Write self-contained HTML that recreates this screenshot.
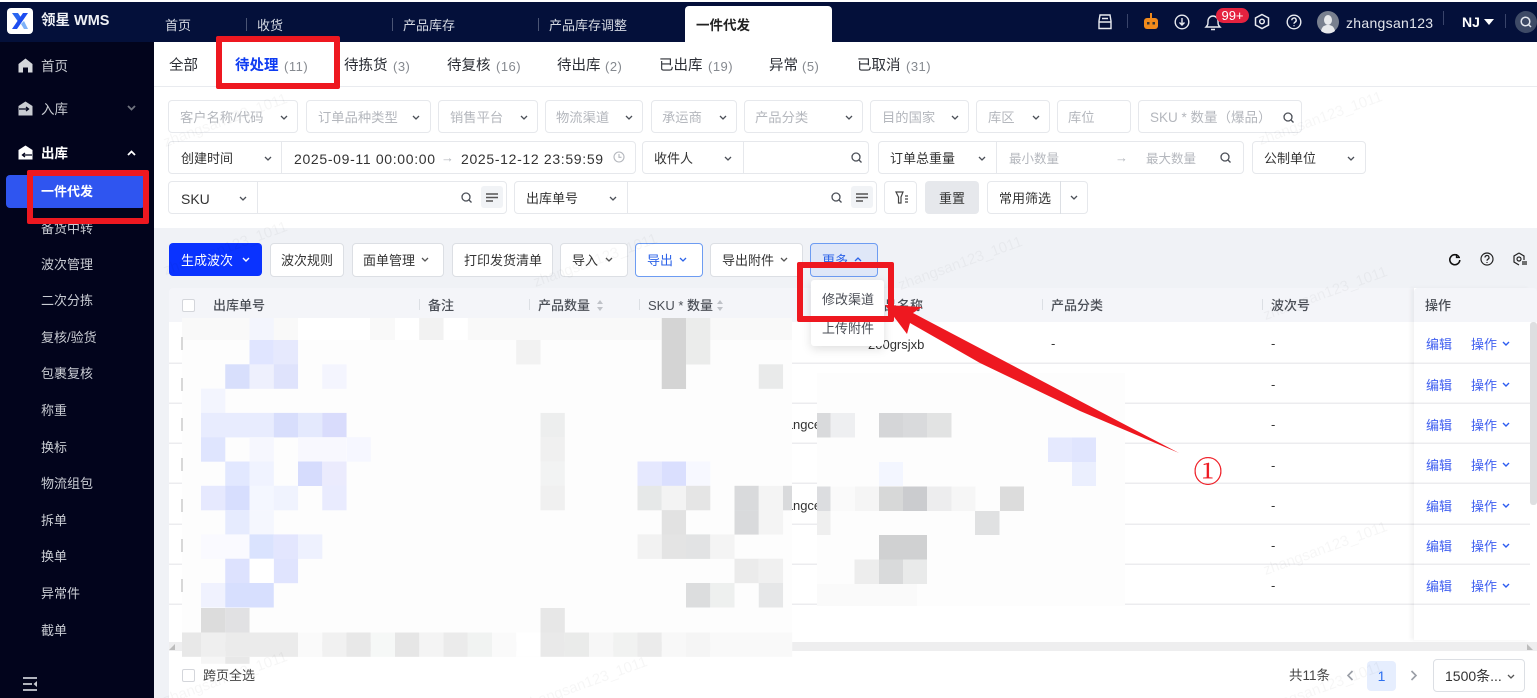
<!DOCTYPE html>
<html lang="zh">
<head>
<meta charset="utf-8">
<title>领星 WMS</title>
<style>
html,body{margin:0;padding:0;width:1537px;height:698px;overflow:hidden;background:#fff}
body{position:relative;font-family:"Liberation Sans","Noto Sans CJK SC",sans-serif;font-size:13px;color:#333}
.t{position:absolute;white-space:nowrap;line-height:16px;height:16px;margin-top:1px}
.b{position:absolute;box-sizing:border-box;background:#fff;border:1.5px solid #e6e8ec;border-radius:4px}
.r{position:absolute;box-sizing:border-box;background:#e2e5e9}
.s{position:absolute;background:#e6e8ec;width:1px}
.red{position:absolute;box-sizing:border-box;border:6px solid #ee1820;border-radius:2px}
.ph{color:#b4b7bd}
.side{color:#c9ccd3;font-size:13.5px}
.tab{font-size:14.5px;color:#2c2f36}
.cnt{font-size:13px;letter-spacing:.5px;color:#85898f}
.nav{color:#d5d9e2;font-size:13px}
.btn{position:absolute;box-sizing:border-box;background:#fff;border:1.5px solid #dcdfe4;border-radius:4px;height:34px}
.th{font-weight:500;font-size:13px;color:#4b4f57}
.link{color:#3f5ff0;font-size:13px}
svg{position:absolute;overflow:visible}
.wm{position:absolute;color:#000;opacity:.03;font-size:15px;transform:rotate(-20deg);white-space:nowrap}
</style>
</head>
<body>
<!-- page background -->
<div style="position:absolute;left:154px;top:42px;width:1383px;height:656px;background:#f0f2f6"></div>
<div style="position:absolute;left:154px;top:42px;width:1383px;height:44px;background:#fff"></div>
<div style="position:absolute;left:154px;top:87px;width:1383px;height:141px;background:#fff"></div>
<div style="position:absolute;left:169px;top:322px;width:1368px;height:376px;background:#fff"></div>

<!-- top bar -->
<div style="position:absolute;left:0;top:2px;width:1537px;height:40px;background:#04103a"></div>
<div style="position:absolute;left:7px;top:8px;width:26px;height:26px;background:#fff;border-radius:4px"></div>
<svg style="left:7px;top:8px" width="26" height="26" viewBox="0 0 26 26"><path d="M5 5h6l4 6-3 4z" fill="#2a66f0"/><path d="M21 5h-5L5 21h5z" fill="#1d4df0"/><path d="M14 16l3-3 4 8h-4z" fill="#7fb2f8"/></svg>
<span class="t" style="left:41px;top:12px;color:#eef0f5;font-weight:700;font-size:14.5px">领星 WMS</span>
<span class="t nav" style="left:165px;top:17px">首页</span>
<div class="s" style="left:246px;top:18px;height:13px;background:#4a5474"></div>
<span class="t nav" style="left:257px;top:17px">收货</span>
<div class="s" style="left:392px;top:18px;height:13px;background:#4a5474"></div>
<span class="t nav" style="left:403px;top:17px">产品库存</span>
<div class="s" style="left:538px;top:18px;height:13px;background:#4a5474"></div>
<span class="t nav" style="left:549px;top:17px">产品库存调整</span>
<div style="position:absolute;left:685px;top:6px;width:147px;height:37px;background:#fff;border-radius:4px 4px 0 0"></div>
<span class="t" style="left:696px;top:17px;font-weight:700;color:#222;font-size:13.5px">一件代发</span>

<!-- top right icons -->
<svg style="left:1097px;top:14px" width="16" height="16" viewBox="0 0 16 16" fill="none" stroke="#e8eaf0" stroke-width="1.4"><path d="M3 1h10l1 6v7.500H2V7zM2 8h12M5 4.500h6"/></svg>
<div class="s" style="left:1127px;top:14px;height:14px;background:#39446a"></div>
<svg style="left:1143px;top:13px" width="16" height="17" viewBox="0 0 16 17"><rect x="1" y="5" width="14" height="11" rx="3" fill="#f08a1c"/><rect x="7" y="0" width="2" height="5" fill="#f08a1c"/><rect x="4" y="9" width="2.5" height="2.5" fill="#333"/><rect x="9.5" y="9" width="2.5" height="2.5" fill="#333"/></svg>
<svg style="left:1174px;top:14px" width="16" height="16" viewBox="0 0 16 16" fill="none" stroke="#e8eaf0" stroke-width="1.4"><circle cx="8" cy="8" r="6.8"/><path d="M8 4v7M5.500 8.500L8 11l2.500-2.500"/></svg>
<svg style="left:1205px;top:14px" width="16" height="17" viewBox="0 0 16 17" fill="none" stroke="#e8eaf0" stroke-width="1.4"><path d="M1 13h14c-2-2-2-3-2-6a5 5 0 0 0-10 0c0 3 0 4-2 6zM6 15.500h4"/></svg>
<div style="position:absolute;left:1216px;top:8px;width:33px;height:15px;background:#e5223f;border-radius:8px;color:#fff;font-size:13px;line-height:15px;text-align:center">99+</div>
<svg style="left:1254px;top:13px" width="16" height="17" viewBox="0 0 16 17" fill="none" stroke="#e8eaf0" stroke-width="1.5"><path d="M8 1.500l6.500 3.500v7L8 15.500 1.500 12V5z"/><circle cx="8" cy="8.500" r="2.300"/></svg>
<svg style="left:1286px;top:14px" width="16" height="16" viewBox="0 0 16 16" fill="none" stroke="#e8eaf0" stroke-width="1.4"><circle cx="8" cy="8" r="6.800"/><path d="M5.800 6.200a2.200 2.200 0 1 1 3.300 1.900c-.8.500-1.100.9-1.100 1.700M8 11.300v1"/></svg>
<svg style="left:1317px;top:11px" width="22" height="22" viewBox="0 0 22 22"><circle cx="11" cy="11" r="11" fill="#79808f"/><ellipse cx="11" cy="9" rx="4" ry="5" fill="#e8e9ec"/><path d="M4 20c1-5 4-6 7-6s6 1 7 6a11 11 0 0 1-14 0z" fill="#e8e9ec"/></svg>
<span class="t" style="left:1346px;top:14px;color:#e2e5ec;font-size:14px;letter-spacing:.3px">zhangsan123</span>
<div class="s" style="left:1443px;top:11px;height:14px;background:#39446a"></div>
<span class="t" style="left:1462px;top:13px;color:#fff;font-weight:700;font-size:14px">NJ</span>
<svg style="left:1484px;top:19px" width="10" height="6" viewBox="0 0 10 6"><path d="M0 0h10L5 6z" fill="#fff"/></svg>
<div class="s" style="left:1505px;top:14px;height:14px;background:#39446a"></div>
<svg style="left:1515px;top:11px" width="22" height="22" viewBox="0 0 22 22"><circle cx="11" cy="11" r="11" fill="#3e4a66"/><circle cx="10.500" cy="10.500" r="4.300" fill="none" stroke="#e4e7ee" stroke-width="1.500"/><path d="M13.500 13.500l2.500 2.500" stroke="#e4e7ee" stroke-width="1.500"/></svg>

<!-- sidebar -->
<div style="position:absolute;left:0;top:42px;width:154px;height:656px;background:#02041c"></div>
<svg style="left:18px;top:58px" width="15" height="15" viewBox="0 0 15 15"><path d="M7.500 .5L14.500 6v8.500h-4.500V9.500H5v5H.5V6z" fill="#d5d7dc"/></svg>
<svg style="left:18px;top:101px" width="15" height="15" viewBox="0 0 15 15"><path d="M7.500 .5L14.500 5v9.500H.5V5z" fill="#c9ccd2"/><path d="M1 8h9M8 6l2.500 2L8 10" stroke="#02041c" stroke-width="1.300" fill="none"/></svg>
<svg style="left:18px;top:145px" width="15" height="15" viewBox="0 0 15 15"><path d="M7.500 .5L14.500 5v9.500H.5V5z" fill="#fff"/><path d="M14 10H5M7 8l-2.500 2L7 12" stroke="#02041c" stroke-width="1.300" fill="none"/></svg>
<span class="t side" style="left:41px;top:58px">首页</span>
<span class="t side" style="left:41px;top:101px">入库</span>
<svg style="left:127px;top:105px" width="9" height="6" viewBox="0 0 9 6"><path d="M1 1l3.500 3.500L8 1" stroke="#70747f" stroke-width="1.800" fill="none"/></svg>
<span class="t" style="left:41px;top:145px;color:#fff;font-weight:700;font-size:13.5px">出库</span>
<svg style="left:127px;top:150px" width="9" height="6" viewBox="0 0 9 6"><path d="M1 5l3.500-3.500L8 5" stroke="#fff" stroke-width="1.800" fill="none"/></svg>
<div style="position:absolute;left:6px;top:175px;width:139px;height:33px;background:#2f55f0;border-radius:4px"></div>
<span class="t" style="left:41px;top:183px;color:#fff;font-weight:700;font-size:13px">一件代发</span>
<span class="t side" style="left:41px;top:220px;font-size:13px">备货中转</span>
<span class="t side" style="left:41px;top:256px;font-size:13px">波次管理</span>
<span class="t side" style="left:41px;top:292px;font-size:13px">二次分拣</span>
<span class="t side" style="left:41px;top:329px;font-size:13px">复核/验货</span>
<span class="t side" style="left:41px;top:365px;font-size:13px">包裹复核</span>
<span class="t side" style="left:41px;top:402px;font-size:13px">称重</span>
<span class="t side" style="left:41px;top:439px;font-size:13px">换标</span>
<span class="t side" style="left:41px;top:475px;font-size:13px">物流组包</span>
<span class="t side" style="left:41px;top:512px;font-size:13px">拆单</span>
<span class="t side" style="left:41px;top:548px;font-size:13px">换单</span>
<span class="t side" style="left:41px;top:585px;font-size:13px">异常件</span>
<span class="t side" style="left:41px;top:622px;font-size:13px">截单</span>
<svg style="left:22px;top:676px" width="16" height="16" viewBox="0 0 16 16"><path d="M1 2h14M1 8h9M1 14h14" stroke="#c9ccd3" stroke-width="1.700"/><path d="M15 5v6l-3.500-3z" fill="#c9ccd3"/></svg>

<!-- tabs -->
<div style="position:absolute;left:154px;top:86px;width:1383px;height:1px;background:#e9ebef"></div>
<span class="t tab" style="left:169px;top:57px">全部</span>
<span class="t" style="left:235px;top:57px;font-size:14.500px;font-weight:700;color:#0e3cf2">待处理</span><span class="t cnt" style="left:284px;top:58px">(11)</span>
<span class="t tab" style="left:344px;top:57px">待拣货</span><span class="t cnt" style="left:393px;top:58px">(3)</span>
<span class="t tab" style="left:447px;top:57px">待复核</span><span class="t cnt" style="left:496px;top:58px">(16)</span>
<span class="t tab" style="left:557px;top:57px">待出库</span><span class="t cnt" style="left:605px;top:58px">(2)</span>
<span class="t tab" style="left:659px;top:57px">已出库</span><span class="t cnt" style="left:708px;top:58px">(19)</span>
<span class="t tab" style="left:769px;top:57px">异常</span><span class="t cnt" style="left:802px;top:58px">(5)</span>
<span class="t tab" style="left:857px;top:57px">已取消</span><span class="t cnt" style="left:906px;top:58px">(31)</span>

<!-- filter row 1 -->
<div class="b" style="left:168px;top:100px;width:130px;height:33px"></div>
<div class="b" style="left:306px;top:100px;width:125px;height:33px"></div>
<div class="b" style="left:438px;top:100px;width:100px;height:33px"></div>
<div class="b" style="left:545px;top:100px;width:98px;height:33px"></div>
<div class="b" style="left:651px;top:100px;width:86px;height:33px"></div>
<div class="b" style="left:744px;top:100px;width:119px;height:33px"></div>
<div class="b" style="left:870px;top:100px;width:99px;height:33px"></div>
<div class="b" style="left:976px;top:100px;width:74px;height:33px"></div>
<div class="b" style="left:1057px;top:100px;width:74px;height:33px"></div>
<div class="b" style="left:1138px;top:100px;width:164px;height:33px"></div>
<span class="t ph" style="left:180px;top:109px;font-size:13.300px">客户名称/代码</span>
<span class="t ph" style="left:318px;top:109px;font-size:13.300px">订单品种类型</span>
<span class="t ph" style="left:450px;top:109px;font-size:13.300px">销售平台</span>
<span class="t ph" style="left:556px;top:109px;font-size:13.300px">物流渠道</span>
<span class="t ph" style="left:662px;top:109px;font-size:13.300px">承运商</span>
<span class="t ph" style="left:755px;top:109px;font-size:13.300px">产品分类</span>
<span class="t ph" style="left:882px;top:109px;font-size:13.300px">目的国家</span>
<span class="t ph" style="left:988px;top:109px;font-size:13.300px">库区</span>
<span class="t ph" style="left:1068px;top:109px;font-size:13.300px">库位</span>
<span class="t ph" style="left:1150px;top:109px;font-size:13.500px">SKU * 数量（爆品）</span>

<!-- filter row 2 -->
<div class="b" style="left:168px;top:141px;width:468px;height:33px"></div>
<div class="s" style="left:281px;top:141px;height:33px"></div>
<span class="t" style="left:181px;top:150px">创建时间</span>
<span class="t" style="left:294px;top:150px;font-size:14px;letter-spacing:.67px;color:#333">2025-09-11 00:00:00</span>
<span class="t ph" style="left:441px;top:149px;font-size:13px">→</span>
<span class="t" style="left:461px;top:150px;font-size:14px;letter-spacing:.67px;color:#333">2025-12-12 23:59:59</span>
<svg style="left:613px;top:151px" width="12" height="12" viewBox="0 0 12 12" fill="none" stroke="#b4b7bd" stroke-width="1.100"><circle cx="6" cy="6" r="5"/><path d="M6 3v3.300h2.500"/></svg>
<div class="b" style="left:642px;top:141px;width:227px;height:33px;background:none"></div>
<div class="s" style="left:743px;top:141px;height:33px"></div>
<span class="t" style="left:654px;top:150px">收件人</span>
<div class="b" style="left:878px;top:141px;width:366px;height:33px;background:none"></div>
<div class="s" style="left:996px;top:141px;height:33px"></div>
<span class="t" style="left:890px;top:150px">订单总重量</span>
<span class="t ph" style="left:1009px;top:150px;font-size:12.500px">最小数量</span>
<span class="t ph" style="left:1115px;top:149px">→</span>
<span class="t ph" style="left:1146px;top:150px;font-size:12.500px">最大数量</span>
<div class="b" style="left:1252px;top:141px;width:114px;height:33px;background:none"></div>
<span class="t" style="left:1264px;top:150px">公制单位</span>

<!-- filter row 3 -->
<div class="b" style="left:168px;top:181px;width:339px;height:33px;background:none"></div>
<div class="s" style="left:257px;top:181px;height:33px"></div>
<span class="t" style="left:181px;top:190px;font-size:14px">SKU</span>
<div style="position:absolute;left:481px;top:186px;width:22px;height:22px;background:#f1f3f6;border-radius:3px"></div>
<svg style="left:486px;top:193px" width="12" height="9" viewBox="0 0 12 9"><path d="M0 1h12M0 4.500h12M0 8h7" stroke="#555" stroke-width="1.500"/></svg>
<div class="b" style="left:514px;top:181px;width:363px;height:33px;background:none"></div>
<div class="s" style="left:627px;top:181px;height:33px"></div>
<span class="t" style="left:526px;top:190px">出库单号</span>
<div style="position:absolute;left:851px;top:186px;width:22px;height:22px;background:#f1f3f6;border-radius:3px"></div>
<svg style="left:856px;top:193px" width="12" height="9" viewBox="0 0 12 9"><path d="M0 1h12M0 4.500h12M0 8h7" stroke="#555" stroke-width="1.500"/></svg>
<div class="b" style="left:884px;top:181px;width:33px;height:33px;background:none"></div>
<svg style="left:895px;top:191px" width="13" height="13" viewBox="0 0 13 13" fill="none" stroke="#444" stroke-width="1.200"><path d="M1 1h7L6 6v6H3.500V6zM10 5h3M10 8h3M10 11h3"/></svg>
<div class="r" style="left:925px;top:181px;width:54px;height:33px;border-radius:4px;background:#e6e8ec"></div>
<span class="t" style="left:939px;top:190px;color:#333">重置</span>
<div class="b" style="left:987px;top:181px;width:101px;height:33px;background:none"></div>
<div class="s" style="left:1060px;top:181px;height:33px;background:#dcdfe4"></div>
<span class="t" style="left:999px;top:190px">常用筛选</span>

<!-- filter chevrons and search icons -->
<svg style="left:0;top:0" width="1537" height="698" fill="none" stroke="#4b4f57" stroke-width="1.300">
<defs><path id="c" d="M0 0l3 3 3-3"/><g id="m"><circle cx="5" cy="5" r="4"/><path d="M8 8l2.500 2.500"/></g></defs>
<use href="#c" x="281" y="116"/><use href="#c" x="413" y="116"/><use href="#c" x="521" y="116"/><use href="#c" x="626" y="116"/><use href="#c" x="720" y="116"/><use href="#c" x="846" y="116"/><use href="#c" x="952" y="116"/><use href="#c" x="1033" y="116"/>
<use href="#m" x="1283" y="112"/>
<use href="#c" x="265" y="157"/><use href="#c" x="725" y="157"/><use href="#c" x="979" y="157"/><use href="#c" x="1348" y="157"/>
<use href="#m" x="851" y="152"/><use href="#m" x="1220" y="152"/>
<use href="#c" x="240" y="197"/><use href="#c" x="610" y="197"/><use href="#c" x="1071" y="196"/>
<use href="#m" x="461" y="192"/><use href="#m" x="831" y="192"/>
</svg>

<!-- toolbar -->
<div style="position:absolute;left:169px;top:243px;width:93px;height:33px;background:#0a33ff;border-radius:4px"></div>
<span class="t" style="left:181px;top:252px;color:#fff">生成波次</span>
<svg style="left:242px;top:257px" width="8" height="5" viewBox="0 0 8 5"><path d="M1 1l3 3 3-3" stroke="#fff" stroke-width="1.400" fill="none"/></svg>
<div class="btn" style="left:270px;top:243px;width:74px"></div><span class="t" style="left:281px;top:252px">波次规则</span>
<div class="btn" style="left:352px;top:243px;width:92px"></div><span class="t" style="left:363px;top:252px">面单管理</span>
<div class="btn" style="left:452px;top:243px;width:101px"></div><span class="t" style="left:464px;top:252px">打印发货清单</span>
<div class="btn" style="left:560px;top:243px;width:68px"></div><span class="t" style="left:572px;top:252px">导入</span>
<div class="btn" style="left:635px;top:243px;width:68px;border-color:#6d9cf2"></div><span class="t" style="left:647px;top:252px;color:#2c63e8">导出</span>
<div class="btn" style="left:710px;top:243px;width:93px"></div><span class="t" style="left:722px;top:252px">导出附件</span>
<div class="btn" style="left:810px;top:243px;width:68px;border-color:#6d9cf2;background:#dfe7f8"></div><span class="t" style="left:822px;top:252px;color:#2c63e8">更多</span>
<svg style="left:0;top:0" width="1537" height="698" fill="none" stroke="#555" stroke-width="1.300">
<use href="#c" x="422" y="258"/><use href="#c" x="606" y="258"/><use href="#c" x="680" y="258" stroke="#2c63e8"/><use href="#c" x="781" y="258"/>
<path d="M855 261l3-3 3 3" stroke="#2c63e8"/>
</svg>
<svg style="left:1448px;top:253px" width="13" height="13" viewBox="0 0 13 13" fill="none" stroke="#111" stroke-width="1.600"><path d="M11 4a5 5 0 1 0 .8 3"/><path d="M8.500 1v3.500H12" stroke-width="1.300"/></svg>
<svg style="left:1480px;top:252px" width="14" height="14" viewBox="0 0 14 14" fill="none" stroke="#222" stroke-width="1.200"><circle cx="7" cy="7" r="6"/><path d="M5 5.500a2 2 0 1 1 3 1.700c-.7.400-1 .8-1 1.500M7 10v1"/></svg>
<svg style="left:1513px;top:252px" width="14" height="14" viewBox="0 0 14 14" fill="none" stroke="#222" stroke-width="1.200"><path d="M6 1l5 3v4M6 1L1 4v6l5 3"/><circle cx="6" cy="7" r="2"/><path d="M9 10h5M9 12h5"/></svg>

<!-- table header -->
<div style="position:absolute;left:169px;top:288px;width:1368px;height:34px;background:#f4f5f9;border-radius:4px 4px 0 0"></div>
<div style="position:absolute;left:182px;top:299px;width:13px;height:13px;box-sizing:border-box;border:1.500px solid #d4d6db;border-radius:2px;background:#fff"></div>
<span class="t th" style="left:213px;top:297px">出库单号</span>
<div class="s" style="left:419px;top:299px;height:11px;background:#dcdfe4"></div>
<span class="t th" style="left:428px;top:297px">备注</span>
<div class="s" style="left:529px;top:299px;height:11px;background:#dcdfe4"></div>
<span class="t th" style="left:538px;top:297px">产品数量</span>
<svg style="left:596px;top:300px" width="8" height="11" viewBox="0 0 8 11"><path d="M4 0l3 4H1zM4 11L1 7h6z" fill="#bfc2c8"/></svg>
<div class="s" style="left:639px;top:299px;height:11px;background:#dcdfe4"></div>
<span class="t th" style="left:648px;top:297px">SKU * 数量</span>
<svg style="left:716px;top:300px" width="8" height="11" viewBox="0 0 8 11"><path d="M4 0l3 4H1zM4 11L1 7h6z" fill="#bfc2c8"/></svg>
<span class="t th" style="left:884px;top:297px">品名称</span>
<div class="s" style="left:1042px;top:299px;height:11px;background:#dcdfe4"></div>
<span class="t th" style="left:1051px;top:297px">产品分类</span>
<div class="s" style="left:1262px;top:299px;height:11px;background:#dcdfe4"></div>
<span class="t th" style="left:1271px;top:297px">波次号</span>

<!-- row lines -->
<svg style="left:0;top:0" width="1537" height="698">
<g fill="#ececef">
<rect x="169" y="362.500" width="1245" height="1.500"/><rect x="169" y="402.500" width="1245" height="1.500"/><rect x="169" y="442.500" width="1245" height="1.500"/><rect x="169" y="482.500" width="1245" height="1.500"/><rect x="169" y="523.500" width="1245" height="1.500"/><rect x="169" y="563.500" width="1245" height="1.500"/><rect x="169" y="603.500" width="1245" height="1.500"/>
</g>
</svg>
<span class="t" style="left:868px;top:336px;font-size:13px">200grsjxb</span>
<span class="t" style="left:1051px;top:335px">-</span>
<span class="t" style="left:772px;top:416px;font-size:13px">zhangces</span>
<span class="t" style="left:772px;top:497px;font-size:13px">zhangces</span>
<span class="t" style="left:1271px;top:335px">-</span>
<span class="t" style="left:1271px;top:376px">-</span>
<span class="t" style="left:1271px;top:416px">-</span>
<span class="t" style="left:1271px;top:457px">-</span>
<span class="t" style="left:1271px;top:497px">-</span>
<span class="t" style="left:1271px;top:537px">-</span>
<span class="t" style="left:1271px;top:577px">-</span>

<!-- mosaic -->
<svg style="left:0;top:0" width="1537" height="698">
<rect x="182" y="318" width="610" height="339" fill="#fdfdfd"/>
<rect x="817" y="373" width="308" height="233" fill="#fdfdfd"/>
<rect x="182" y="318" width="610" height="22" fill="#f9f9f9"/>
<rect x="249.500" y="318" width="24.300" height="22" fill="#f3f5fd"/>
<rect x="298" y="318" width="72" height="22" fill="#fff"/>
<rect x="395" y="318" width="24.300" height="22" fill="#fff"/>
<rect x="419.250" y="318" width="24.300" height="22" fill="#f2f2f2"/>
<rect x="443.500" y="318" width="24.300" height="22" fill="#fff"/>
<!-- r1 -->
<rect x="249.500" y="340" width="24.300" height="24.500" fill="#e0e5ff"/><rect x="273.750" y="340" width="24.300" height="24.500" fill="#e6e9fd"/><rect x="516.250" y="340" width="24.300" height="24.500" fill="#f2f2f2"/>
<!-- r2 -->
<rect x="225.250" y="364.300" width="24.300" height="24.500" fill="#d8dffc"/><rect x="249.500" y="364.300" width="24.300" height="24.500" fill="#eef0fd"/><rect x="273.750" y="364.300" width="24.300" height="24.500" fill="#dfe3fc"/><rect x="322.250" y="364.300" width="24.300" height="24.500" fill="#f4f5fe"/>
<!-- r3 -->
<rect x="201" y="388.600" width="24.300" height="24.500" fill="#f3f5fe"/>
<!-- r4 -->
<rect x="201" y="412.900" width="72.800" height="24.500" fill="#e8ecfe"/><rect x="273.750" y="412.900" width="24.300" height="24.500" fill="#d8defc"/><rect x="298" y="412.900" width="24.300" height="24.500" fill="#e4e9fd"/><rect x="322.250" y="412.900" width="24.300" height="24.500" fill="#d9dcfc"/>
<rect x="540.500" y="412.900" width="24.300" height="24.500" fill="#edeeee"/>
<!-- r5 -->
<rect x="201" y="437.200" width="24.300" height="24.500" fill="#dfe5fe"/><rect x="249.500" y="437.200" width="24.300" height="24.500" fill="#f6f7fe"/><rect x="298" y="437.200" width="48" height="24.500" fill="#f8f8fe"/><rect x="346.500" y="437.200" width="24.300" height="24.500" fill="#f6f7ff"/><rect x="540.500" y="437.200" width="24.300" height="24.500" fill="#f0f0f0"/>
<!-- r6 -->
<rect x="225.250" y="461.500" width="24.300" height="24.500" fill="#e2e8ff"/><rect x="249.500" y="461.500" width="24.300" height="24.500" fill="#f0f3ff"/><rect x="298" y="461.500" width="24.300" height="24.500" fill="#d6dcfd"/><rect x="322.250" y="461.500" width="24.300" height="24.500" fill="#ebebfd"/><rect x="540.500" y="461.500" width="24.300" height="24.500" fill="#f2f3f3"/><rect x="637.500" y="461.500" width="24.300" height="24.500" fill="#e5e8fe"/><rect x="661.750" y="461.500" width="24.300" height="24.500" fill="#dadffe"/><rect x="686" y="461.500" width="24.300" height="24.500" fill="#f7f8ff"/>
<!-- r7 -->
<rect x="201" y="485.800" width="24.300" height="24.500" fill="#e6e9fe"/><rect x="225.250" y="485.800" width="24.300" height="24.500" fill="#d7defe"/><rect x="249.500" y="485.800" width="24.300" height="24.500" fill="#f4f7ff"/><rect x="273.750" y="485.800" width="24.300" height="24.500" fill="#f0f3fe"/><rect x="322.250" y="485.800" width="24.300" height="24.500" fill="#e9ebfe"/><rect x="540.500" y="485.800" width="24.300" height="24.500" fill="#f0f0f0"/><rect x="637.500" y="485.800" width="24.300" height="24.500" fill="#e6e8e8"/><rect x="661.750" y="485.800" width="24.300" height="24.500" fill="#f3f3f3"/><rect x="686" y="485.800" width="24.300" height="24.500" fill="#e5e5e5"/><rect x="734.500" y="485.800" width="24.300" height="24.500" fill="#d9dadc"/><rect x="758.750" y="485.800" width="24.300" height="24.500" fill="#f4f4f4"/><rect x="783" y="485.800" width="9" height="24.500" fill="#d9dadc"/>
<!-- r8 -->
<rect x="225.250" y="510.100" width="24.300" height="24.500" fill="#e6ebfe"/><rect x="249.500" y="510.100" width="24.300" height="24.500" fill="#f5f7fe"/><rect x="661.750" y="510.100" width="24.300" height="24.500" fill="#e2e2e2"/><rect x="734.500" y="510.100" width="24.300" height="24.500" fill="#d9dadc"/><rect x="758.750" y="510.100" width="24.300" height="24.500" fill="#f4f4f4"/>
<!-- r9 -->
<rect x="201" y="534.400" width="48.500" height="24.500" fill="#fafaff"/><rect x="249.500" y="534.400" width="24.300" height="24.500" fill="#dae3fe"/><rect x="273.750" y="534.400" width="24.300" height="24.500" fill="#e3e6fe"/><rect x="298" y="534.400" width="24.300" height="24.500" fill="#eef1fe"/><rect x="637.500" y="534.400" width="24.300" height="24.500" fill="#f2f2f2"/><rect x="661.750" y="534.400" width="24.300" height="24.500" fill="#e4e4e4"/><rect x="686" y="534.400" width="24.300" height="24.500" fill="#e2e3e4"/><rect x="710.250" y="534.400" width="24.300" height="24.500" fill="#f4f4f4"/>
<!-- r10 -->
<rect x="225.250" y="558.700" width="24.300" height="24.500" fill="#dde2fe"/><rect x="273.750" y="558.700" width="24.300" height="24.500" fill="#e0e4fe"/><rect x="249.500" y="558.700" width="24.300" height="24.500" fill="#fff"/><rect x="734.500" y="558.700" width="24.300" height="24.500" fill="#ebebeb"/><rect x="758.750" y="558.700" width="24.300" height="24.500" fill="#f0f0f0"/>
<!-- r11 -->
<rect x="201" y="583" width="24.300" height="24.500" fill="#f0f2fe"/><rect x="225.250" y="583" width="48.500" height="24.500" fill="#d7dffe"/><rect x="686" y="583" width="24.300" height="24.500" fill="#dcddde"/><rect x="710.250" y="583" width="24.300" height="24.500" fill="#eef0ef"/><rect x="758.750" y="583" width="24.300" height="24.500" fill="#e6e7e8"/>
<!-- r12 -->
<rect x="201" y="608" width="24.300" height="24.500" fill="#dcdcdc"/><rect x="225.250" y="608" width="24.300" height="24.500" fill="#e1e1e3"/><rect x="540.500" y="608" width="24.300" height="24.500" fill="#e7e7e7"/>
<rect x="201" y="656.800" width="24.300" height="7" fill="#f6f6f6"/><rect x="225.250" y="656.800" width="24.300" height="7" fill="#e8e8e8"/>
<!-- top sku cells -->
<rect x="661.750" y="318" width="24.300" height="71" fill="#d4d4d4"/><rect x="686" y="318" width="24.300" height="46.500" fill="#ebeceb"/><rect x="758.750" y="364.300" width="24.300" height="24.500" fill="#e9eaea"/>
<!-- second mosaic -->
<rect x="817" y="413" width="13.500" height="24.500" fill="#d9dadc"/><rect x="830.500" y="413" width="24.500" height="24.500" fill="#eeeff1"/><rect x="879" y="413" width="24" height="24.500" fill="#d5d6d8"/><rect x="903" y="413" width="24" height="24.500" fill="#d9dadc"/><rect x="927" y="413" width="24.500" height="24.500" fill="#e2e3e3"/>
<rect x="1048" y="437.500" width="24" height="24.500" fill="#e5e9fe"/><rect x="1072" y="437.500" width="24" height="24.500" fill="#e0e5fe"/>
<rect x="879" y="462" width="24" height="24" fill="#f3f6ff"/><rect x="1072" y="462" width="24" height="24" fill="#ebeffe"/>
<rect x="817" y="486.500" width="13.500" height="24.500" fill="#dcdde0"/><rect x="830.500" y="486.500" width="24.500" height="24.500" fill="#fafafa"/><rect x="855" y="486.500" width="24" height="24.500" fill="#f5f5f5"/><rect x="879" y="486.500" width="24" height="24.500" fill="#d7d8d8"/><rect x="903" y="486.500" width="24" height="24.500" fill="#cbcccf"/><rect x="927" y="486.500" width="24.500" height="24.500" fill="#ededee"/><rect x="951.500" y="486.500" width="24" height="24.500" fill="#f6f6f6"/><rect x="1000" y="486.500" width="24" height="24.500" fill="#dcdcdc"/>
<rect x="817" y="511" width="13.500" height="24" fill="#efefef"/><rect x="975" y="511" width="24.500" height="24" fill="#e0e1e2"/>
<rect x="879" y="535" width="48" height="24.500" fill="#d0d1d2"/>
<rect x="854.500" y="559.500" width="24.500" height="24.500" fill="#ededed"/><rect x="879" y="559.500" width="24" height="24.500" fill="#d9dadb"/><rect x="903" y="559.500" width="24" height="24.500" fill="#e9eaea"/>
<rect x="817" y="584" width="100" height="22" fill="#fafafa"/>
</svg>
<div style="position:absolute;left:181px;top:337px;width:1.500px;height:13px;background:#d8d8d8"></div>
<div style="position:absolute;left:181px;top:378px;width:1.500px;height:13px;background:#d8d8d8"></div>
<div style="position:absolute;left:181px;top:418px;width:1.500px;height:13px;background:#d8d8d8"></div>
<div style="position:absolute;left:181px;top:458px;width:1.500px;height:13px;background:#d8d8d8"></div>
<div style="position:absolute;left:181px;top:499px;width:1.500px;height:13px;background:#d8d8d8"></div>
<div style="position:absolute;left:181px;top:539px;width:1.500px;height:13px;background:#d8d8d8"></div>
<div style="position:absolute;left:181px;top:579px;width:1.500px;height:13px;background:#d8d8d8"></div>

<!-- fixed column -->
<div style="position:absolute;left:1414px;top:288px;width:116px;height:352px;background:#fff;box-shadow:-3px 0 4px rgba(0,0,0,.05)"></div>
<div style="position:absolute;left:1414px;top:288px;width:123px;height:34px;background:#f4f5f9;border-radius:4px 4px 0 0"></div>
<span class="t th" style="left:1425px;top:297px">操作</span>
<svg style="left:1414px;top:0" width="116" height="698"><g fill="#ececef"><rect y="362.500" width="116" height="1.500"/><rect y="402.500" width="116" height="1.500"/><rect y="442.500" width="116" height="1.500"/><rect y="482.500" width="116" height="1.500"/><rect y="523.500" width="116" height="1.500"/><rect y="563.500" width="116" height="1.500"/><rect y="603.500" width="116" height="1.500"/></g></svg>
<span class="t link" style="left:1426px;top:336px">编辑</span><span class="t link" style="left:1471px;top:336px">操作</span>
<span class="t link" style="left:1426px;top:377px">编辑</span><span class="t link" style="left:1471px;top:377px">操作</span>
<span class="t link" style="left:1426px;top:417px">编辑</span><span class="t link" style="left:1471px;top:417px">操作</span>
<span class="t link" style="left:1426px;top:457px">编辑</span><span class="t link" style="left:1471px;top:457px">操作</span>
<span class="t link" style="left:1426px;top:498px">编辑</span><span class="t link" style="left:1471px;top:498px">操作</span>
<span class="t link" style="left:1426px;top:538px">编辑</span><span class="t link" style="left:1471px;top:538px">操作</span>
<span class="t link" style="left:1426px;top:578px">编辑</span><span class="t link" style="left:1471px;top:578px">操作</span>
<svg style="left:0;top:0" width="1537" height="698" fill="none" stroke="#2c5cf0" stroke-width="1.400">
<use href="#c" x="1503" y="342"/><use href="#c" x="1503" y="383"/><use href="#c" x="1503" y="423"/><use href="#c" x="1503" y="463"/><use href="#c" x="1503" y="504"/><use href="#c" x="1503" y="544"/><use href="#c" x="1503" y="584"/>
</svg>
<div style="position:absolute;left:1530px;top:322px;width:7px;height:183px;background:#dedfe1;border-radius:3px"></div>

<!-- horizontal scrollbar -->
<div style="position:absolute;left:169px;top:642px;width:1368px;height:9px;background:#eeeeef"></div>
<svg style="left:169px;top:644px" width="8" height="6" viewBox="0 0 8 6"><path d="M6 0v6H0z" fill="#bcbcbc"/></svg>
<svg style="left:1527px;top:644px" width="8" height="6" viewBox="0 0 8 6"><path d="M0 0v6h6z" fill="#bcbcbc"/></svg>
<!-- r13 mosaic row over the scrollbar -->
<svg style="left:0;top:0" width="1537" height="698"><rect x="182" y="632.500" width="19" height="24.300" fill="#e8e8e8"/><rect x="201" y="632.500" width="24.300" height="24.300" fill="#efefef"/><rect x="225.250" y="632.500" width="72.800" height="24.300" fill="#ebebeb"/><rect x="298" y="632.500" width="24.300" height="24.300" fill="#fafafa"/><rect x="322.250" y="632.500" width="24.300" height="24.300" fill="#f1f1f1"/><rect x="346.500" y="632.500" width="24.300" height="24.300" fill="#e8e8e8"/><rect x="370.750" y="632.500" width="24.300" height="24.300" fill="#f6f8f7"/><rect x="395" y="632.500" width="24.300" height="24.300" fill="#e6e6e6"/><rect x="419.250" y="632.500" width="24.300" height="24.300" fill="#f4f4f4"/><rect x="443.500" y="632.500" width="24.300" height="24.300" fill="#ebebeb"/><rect x="467.750" y="632.500" width="24.300" height="24.300" fill="#f1f3f2"/><rect x="492" y="632.500" width="24.300" height="24.300" fill="#fafafa"/><rect x="516.250" y="632.500" width="24.300" height="24.300" fill="#fff"/><rect x="540.500" y="632.500" width="24.300" height="24.300" fill="#e9e9e9"/><rect x="564.750" y="632.500" width="24.300" height="24.300" fill="#eaebea"/><rect x="589" y="632.500" width="24.300" height="24.300" fill="#f7f7f7"/><rect x="613.250" y="632.500" width="24.300" height="24.300" fill="#f1f2f1"/><rect x="637.500" y="632.500" width="24.300" height="24.300" fill="#ebebeb"/><rect x="661.750" y="632.500" width="24.300" height="24.300" fill="#f8f8f8"/><rect x="686" y="632.500" width="24.300" height="24.300" fill="#f5f5f5"/><rect x="710.250" y="632.500" width="82" height="24.300" fill="#f9f9f9"/></svg>

<!-- footer -->
<div style="position:absolute;left:182px;top:669px;width:13px;height:13px;box-sizing:border-box;border:1.500px solid #d4d6db;border-radius:2px;background:#fff"></div>
<span class="t" style="left:203px;top:667px;font-size:13px;color:#444">跨页全选</span>
<span class="t" style="left:1289px;top:667px;font-size:13.500px;color:#444">共11条</span>
<svg style="left:1346px;top:670px" width="8" height="11" viewBox="0 0 8 11"><path d="M6.500 1L2 5.500 6.500 10" stroke="#9a9ea6" stroke-width="1.600" fill="none"/></svg>
<div style="position:absolute;left:1367px;top:661px;width:29px;height:30px;background:#e6eefe;border-radius:4px;color:#2c70f0;font-size:14px;line-height:30px;text-align:center">1</div>
<svg style="left:1410px;top:670px" width="8" height="11" viewBox="0 0 8 11"><path d="M1.500 1L6 5.500 1.500 10" stroke="#9a9ea6" stroke-width="1.600" fill="none"/></svg>
<div class="b" style="left:1433px;top:659px;width:92px;height:33px;border-color:#dcdfe4"></div>
<span class="t" style="left:1445px;top:667px;font-size:14px">1500条...</span>
<svg style="left:1507px;top:674px" width="8" height="5" viewBox="0 0 8 5"><path d="M1 1l3 3 3-3" stroke="#555" stroke-width="1.300" fill="none"/></svg>

<!-- dropdown -->
<div style="position:absolute;left:811px;top:280px;width:73px;height:66px;background:#fff;border-radius:3px;box-shadow:0 3px 10px rgba(0,0,0,.13)"></div>
<span class="t" style="left:822px;top:291px;color:#4a4d55;font-size:13px">修改渠道</span>
<span class="t" style="left:822px;top:320px;color:#4a4d55;font-size:13px">上传附件</span>

<!-- watermarks -->
<span class="wm" style="left:160px;top:112px">zhangsan123_1011</span>
<span class="wm" style="left:1255px;top:110px">zhangsan123_1011</span>
<span class="wm" style="left:1260px;top:285px">zhangsan123_1011</span>
<span class="wm" style="left:530px;top:252px">zhangsan123_1011</span>
<span class="wm" style="left:895px;top:255px">zhangsan123_1011</span>
<span class="wm" style="left:160px;top:240px">zhangsan123_1011</span>
<span class="wm" style="left:1260px;top:540px">zhangsan123_1011</span>
<span class="wm" style="left:1255px;top:680px">zhangsan123_1011</span>
<span class="wm" style="left:160px;top:670px">zhangsan123_1011</span>
<span class="wm" style="left:520px;top:675px">zhangsan123_1011</span>

<!-- annotations -->
<div class="red" style="left:216px;top:36px;width:124px;height:53px"></div>
<div class="red" style="left:27px;top:170px;width:122px;height:54px"></div>
<div class="red" style="left:797px;top:262px;width:97px;height:60px"></div>
<svg style="left:0;top:0" width="1537" height="698"><polygon points="885,305 922,307 913,313 1080,401 1179,453 1080,411 980,363 910,323 907,334" fill="#ee1820"/></svg>
<span class="t" style="left:1193px;top:458px;width:30px;height:28px;line-height:28px;font-size:29px;color:#ee1820;font-family:'Liberation Serif','Noto Serif CJK SC',serif;text-align:center;-webkit-text-stroke:.3px #ee1820">①</span>
</body>
</html>
